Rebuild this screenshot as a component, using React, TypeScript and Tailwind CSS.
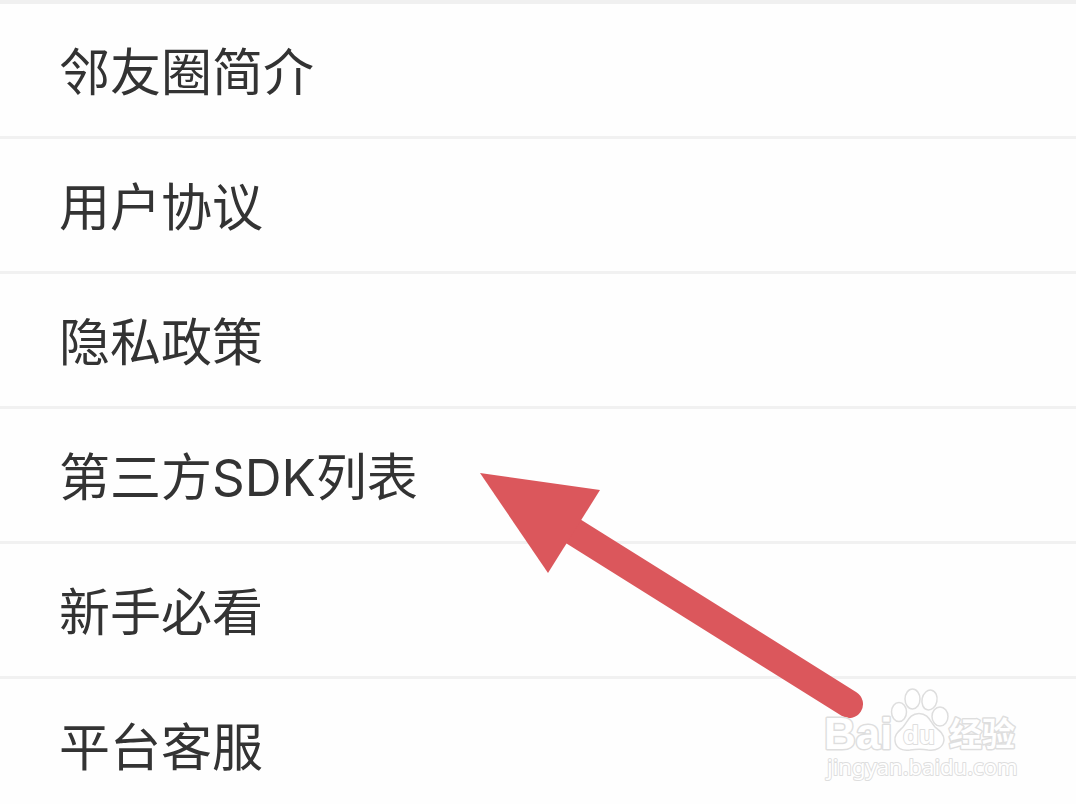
const items = [
  '邻友圈简介',
  '用户协议',
  '隐私政策',
  '第三方SDK列表',
  '新手必看',
  '平台客服',
];

function PointerArrow() {
  return (
    <svg
      aria-hidden="true"
      className="pointer-events-none absolute left-[480px] top-[472px]"
      width="384"
      height="248"
      viewBox="480 472 384 248"
    >
      <line x1="560" y1="523" x2="849" y2="704" stroke="#db575c" strokeWidth="28" strokeLinecap="round" />
      <path d="M480 473 L600 490 L548 573 Z" fill="#db575c" />
    </svg>
  );
}

function Watermark() {
  return (
    <svg
      role="img"
      aria-label="Baidu 经验"
      className="pointer-events-none absolute left-[820px] top-[684px]"
      width="204"
      height="102"
      viewBox="820 684 204 102"
    >
      <g fill="#ffffff" stroke="#dedede" strokeWidth="1.5" strokeLinejoin="round">
        <g className="font-['Liberation_Sans','Noto_Sans_CJK_SC',sans-serif] font-bold" strokeWidth="3" paintOrder="stroke">
          <text x="824" y="749" fontSize="44">Bai</text>
          <text x="949" y="746" fontSize="33">经验</text>
        </g>
        <ellipse cx="899" cy="712" rx="7.5" ry="9.5" />
        <ellipse cx="912.5" cy="699" rx="7.5" ry="10" />
        <ellipse cx="929.5" cy="700" rx="7.5" ry="10" transform="rotate(12 929.5 700)" />
        <ellipse cx="940" cy="716.500" rx="8" ry="9.5" />
        <path d="M919 713.500 C910 713.500 908 721 903 727 C898 732 894 735 895 741 C896 749 903 751 910 750 C916 749 923 749 928 750 C936 751 943 748 944 740 C944 734 940 731 935 727 C930 721 928 713.500 919 713.500 Z" />
        <text
          x="903"
          y="744"
          fontSize="26"
          strokeWidth="2"
          paintOrder="stroke"
          className="font-['Liberation_Sans',sans-serif] font-bold"
        >
          du
        </text>
        <text
          x="827"
          y="775"
          fontSize="22"
          strokeWidth="2"
          paintOrder="stroke"
          className="font-['Noto_Sans',sans-serif]"
        >
          jingyan.baidu.com
        </text>
      </g>
    </svg>
  );
}

export default function App() {
  return (
    <main className="relative min-h-screen overflow-hidden border-t-4 border-[#f0f0f0] bg-[#fefefe] font-['Inter','Noto_Sans_CJK_SC',sans-serif] text-[51px] leading-[60px] text-[#333333]">
      <nav>
        <ul>
          {items.map((item) => (
            <li key={item} className="border-b-3 border-[#f1f1f1] last:border-b-0">
              <a href="#" className="block px-[59px] pt-[39px] pb-[33px]">
                {item}
              </a>
            </li>
          ))}
        </ul>
      </nav>
      <div className="absolute inset-x-0 -top-1">
        <PointerArrow />
        <Watermark />
      </div>
    </main>
  );
}
